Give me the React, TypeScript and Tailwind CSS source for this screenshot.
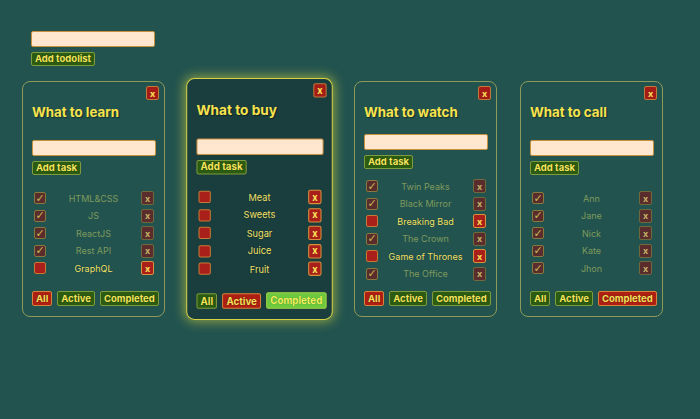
import React from 'react';

type Task = { title: string; done: boolean };
type Filter = 'all' | 'active' | 'completed';

type TodoList = {
  title: string;
  tasks: Task[];
  filter: Filter;
  focused?: boolean;
};

const lists: TodoList[] = [
  {
    title: 'What to learn',
    filter: 'all',
    tasks: [
      { title: 'HTML&CSS', done: true },
      { title: 'JS', done: true },
      { title: 'ReactJS', done: true },
      { title: 'Rest API', done: true },
      { title: 'GraphQL', done: false },
    ],
  },
  {
    title: 'What to buy',
    filter: 'active',
    focused: true,
    tasks: [
      { title: 'Meat', done: false },
      { title: 'Sweets', done: false },
      { title: 'Sugar', done: false },
      { title: 'Juice', done: false },
      { title: 'Fruit', done: false },
    ],
  },
  {
    title: 'What to watch',
    filter: 'all',
    tasks: [
      { title: 'Twin Peaks', done: true },
      { title: 'Black Mirror', done: true },
      { title: 'Breaking Bad', done: false },
      { title: 'The Crown', done: true },
      { title: 'Game of Thrones', done: false },
      { title: 'The Office', done: true },
    ],
  },
  {
    title: 'What to call',
    filter: 'completed',
    tasks: [
      { title: 'Ann', done: true },
      { title: 'Jane', done: true },
      { title: 'Nick', done: true },
      { title: 'Kate', done: true },
      { title: 'Jhon', done: true },
    ],
  },
];

const greenBtn =
  'h-[14px] px-[3px] rounded-[2px] border border-[#7f9c3c] bg-[#2c5b12] text-[#f3e65a] text-[9.5px] font-bold leading-[12px] [text-shadow:0_0_1px_rgba(0,0,0,0.6)]';

const Input = () => (
  <div className="h-[16px] w-[124px] rounded-[2px] border border-[#c9913e] bg-[#fee6cf]" />
);

const TaskRow = ({ task }: { task: Task }) => (
  <div className="h-[17.5px] flex items-center">
    {task.done ? (
      <span className="ml-[2px] w-[12px] h-[12px] rounded-[2px] border border-[#867a3e] bg-[#5b2c2c] flex items-center justify-center text-[#c4b954] text-[11px] leading-none font-['DejaVu_Sans',sans-serif]">
        ✓
      </span>
    ) : (
      <span className="ml-[2px] w-[12px] h-[12px] rounded-[2px] border border-[#c77a35] bg-[#a82019]" />
    )}
    <span
      className={`flex-1 text-center text-[9px] leading-none ${task.done ? 'text-[#7f9a5c]' : 'text-[#f3e36a] [text-shadow:0_0_1px_rgba(0,0,0,0.5)]'}`}
    >
      {task.title}
    </span>
    {task.done ? (
      <span className="w-[13px] h-[14px] rounded-[2px] border border-[#6f6a3e] bg-[#5b2c2c] flex items-center justify-center text-[#c2b466] text-[9px] font-bold leading-none">
        x
      </span>
    ) : (
      <span className="w-[13px] h-[14px] rounded-[2px] border border-[#d9923c] bg-[#a82019] flex items-center justify-center text-[#fbe35a] text-[9px] font-bold leading-none">
        x
      </span>
    )}
  </div>
);

const FilterBtn = ({ label, on, hover }: { label: string; on: boolean; hover?: boolean }) => {
  if (on)
    return (
      <button className="h-[15px] px-[3px] rounded-[2px] border border-[#d9823a] bg-[#ac1f12] text-[#f6e05a] text-[9.5px] font-bold leading-[13px] [text-shadow:0_0_1px_rgba(0,0,0,0.6)]">
        {label}
      </button>
    );
  if (hover)
    return (
      <button className="h-[16px] px-[3px] rounded-[2px] border border-[#a6d244] bg-[#6dca3f] text-[#f1f05c] text-[9.5px] font-bold leading-[14px] [text-shadow:0_0_1px_rgba(0,0,0,0.4)]">
        {label}
      </button>
    );
  return (
    <button className="h-[15px] px-[3px] rounded-[2px] border border-[#7f9c3c] bg-[#2c5b12] text-[#f3e65a] text-[9.5px] font-bold leading-[13px] [text-shadow:0_0_1px_rgba(0,0,0,0.6)]">
      {label}
    </button>
  );
};

const Card = ({ list }: { list: TodoList }) => (
  <div
    className={`w-[143px] h-[236px] shrink-0 flex flex-col rounded-[8px] pt-[4px] pl-[9px] pr-[10px] pb-[10px] ${
      list.focused
        ? 'bg-[#1a3d3e] border border-[#d6d244] shadow-[0_0_10px_2px_rgba(226,222,60,0.55)] scale-[1.025]'
        : 'border border-[#8c9a58]'
    }`}
  >
    <div className="flex justify-end -mr-[5px]">
      <button className="w-[13px] h-[14px] rounded-[2px] border border-[#c07a3a] bg-[#a41c16] text-[#fbe35a] text-[9px] font-bold leading-none">
        x
      </button>
    </div>
    <h3 className="mt-[4px] mb-[5px] text-[13.3px] leading-[17px] font-bold text-[#f7e34e] [text-shadow:1px_1px_1px_rgba(0,0,0,0.45)]">
      {list.title}
    </h3>
    <div className="flex-1 flex flex-col justify-evenly">
      <div className="flex flex-col items-start gap-[5px]">
        <Input />
        <button className={greenBtn}>Add task</button>
      </div>
      <div className="flex flex-col">
        {list.tasks.map((t) => (
          <TaskRow key={t.title} task={t} />
        ))}
      </div>
    </div>
    <div className="flex items-center gap-[5px]">
      <FilterBtn label="All" on={list.filter === 'all'} />
      <FilterBtn label="Active" on={list.filter === 'active'} />
      <FilterBtn label="Completed" on={list.filter === 'completed'} hover={list.focused} />
    </div>
  </div>
);

export default function App() {
  return (
    <div className="w-[700px] h-[419px] bg-[#22534f] font-['Inter','Noto_Sans',sans-serif] overflow-hidden">
      <div className="pt-[31px] pl-[31px] flex flex-col items-start gap-[5px]">
        <Input />
        <button className={greenBtn}>Add todolist</button>
      </div>
      <div className="mt-[15px] pl-[22px] flex gap-[23px]">
        {lists.map((l) => (
          <Card key={l.title} list={l} />
        ))}
      </div>
    </div>
  );
}
